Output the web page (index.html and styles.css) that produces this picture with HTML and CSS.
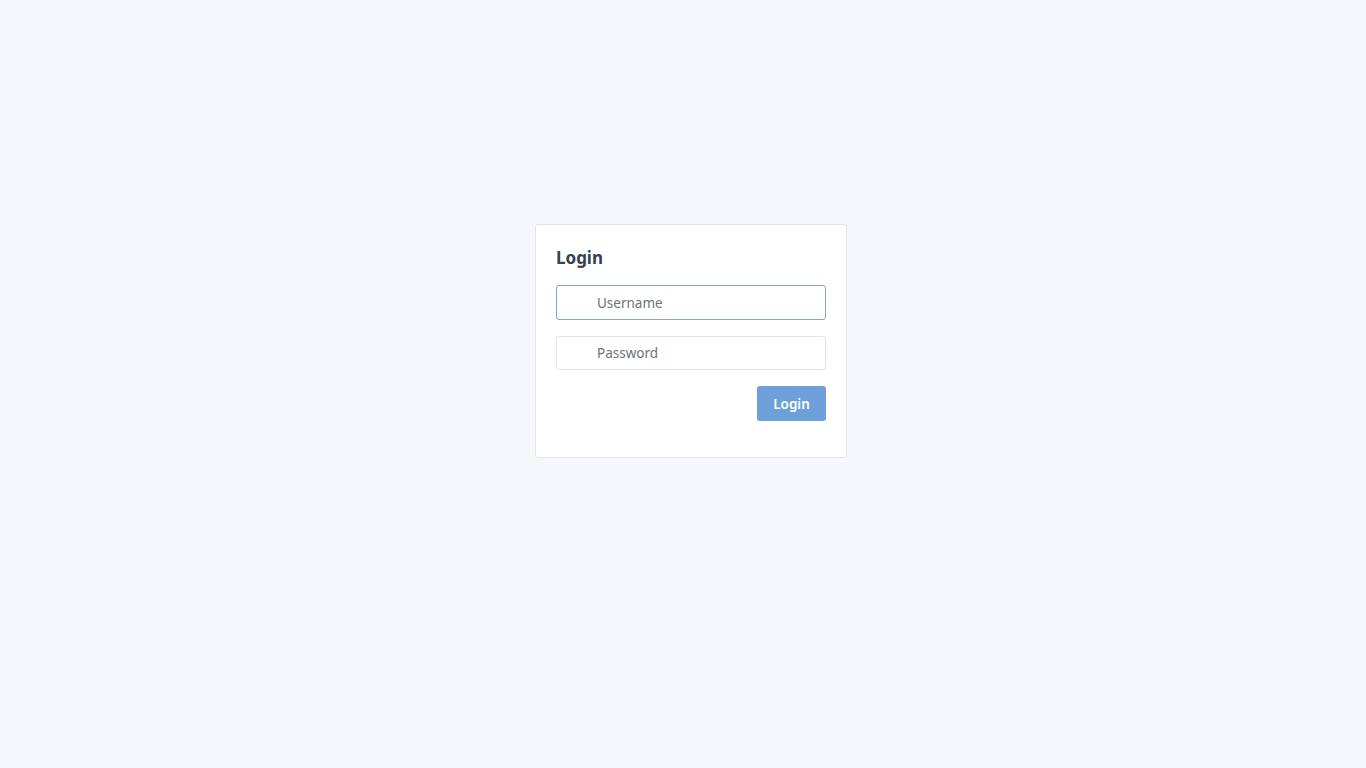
FILE: index.html
```html
<!DOCTYPE html>
<html lang="en">
<head>
    <meta charset="UTF-8">
    <meta name="viewport" content="width=device-width, initial-scale=1.0">
    <title>Login</title>
    <link rel="stylesheet" href="styles.css">
</head>
<body>
    <div class="page">
        <form class="login-box" action="/login" method="POST">
            <h2 class="login-title">Login</h2>
            <input class="field focused" type="text" name="username" placeholder="Username">
            <input class="field" type="password" name="password" placeholder="Password">
            <div class="actions">
                <input class="login-btn" type="submit" value="Login">
            </div>
        </form>
    </div>
</body>
</html>
```

FILE: styles.css
```css
body {
    margin: 0;
    background-color: #f5f7fa;
    font-family: "Noto Sans", "Open Sans", sans-serif;
}
.page {
    display: flex;
    justify-content: center;
    padding: 224px 0 0 16px;
}
.login-box {
    display: flex;
    flex-direction: column;
    gap: 16px;
    width: 270px;
    padding: 20px 20px 36px;
    background-color: #fff;
    border: 1px solid #e1e4e9;
    border-radius: 3px;
}
.login-title {
    margin: 0;
    padding-top: 2px;
    font-size: 17px;
    line-height: 22px;
    font-weight: 700;
    color: #36404f;
}
.field {
    box-sizing: border-box;
    height: 34.5px;
    width: 100%;
    margin: 0;
    padding: 1px 10px 0 40px;
    border: 1px solid #e1e4e9;
    border-radius: 3px;
    font-family: inherit;
    font-size: 13.5px;
    color: #333;
    outline: none;
}
.field::placeholder {
    color: #6b7280;
}
.field.focused {
    border-color: #7ea8dd;
}
.actions {
    display: flex;
    justify-content: flex-end;
}
.login-btn {
    box-sizing: border-box;
    width: 69px;
    height: 35px;
    margin: 0;
    border: none;
    border-radius: 3px;
    background-color: #6d9fd8;
    color: #fff;
    font-family: inherit;
    font-size: 13.5px;
    font-weight: 600;
    cursor: pointer;
}
```
